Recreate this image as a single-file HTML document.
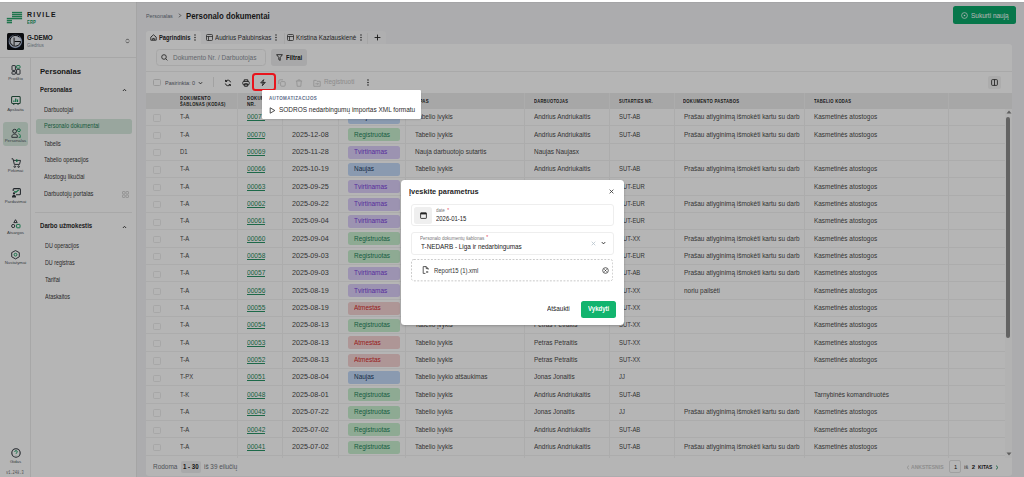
<!DOCTYPE html>
<html><head><meta charset="utf-8"><style>
html,body{margin:0;padding:0;width:1024px;height:477px;overflow:hidden;background:#fff}
body{position:relative;font-family:"Liberation Sans",sans-serif}
.r{position:absolute}
.t{position:absolute;white-space:nowrap;line-height:1;transform-origin:0 0}
</style></head><body>
<div class="r" style="left:0.00px;top:0.00px;width:1024.00px;height:477.00px;background:#f2f2f5"></div>
<div class="r" style="left:0.00px;top:0.00px;width:137.00px;height:477.00px;background:#ffffff"></div>
<div class="r" style="left:136.00px;top:0.00px;width:1.00px;height:477.00px;background:#e9e9e9"></div>
<div class="r" style="left:0.00px;top:57.00px;width:136.00px;height:0.80px;background:#ececec"></div>
<div class="r" style="left:30.00px;top:57.80px;width:0.80px;height:419.20px;background:#ececec"></div>
<svg class="r" style="left:0;top:0" width="30" height="30" viewBox="0 0 30 30" fill="#2aa46c"><rect x="12" y="11.85" width="10.100000000000001" height="1.45"/><rect x="12" y="13.85" width="10.100000000000001" height="1.45"/><rect x="12" y="15.85" width="10.100000000000001" height="1.45"/><rect x="6.8" y="17.85" width="15.3" height="1.45"/><rect x="6.8" y="19.85" width="5.2" height="1.45"/><rect x="6.8" y="21.85" width="5.2" height="1.45"/></svg>
<div class="t" style="left:27.00px;top:11px;font-size:7.2px;font-weight:bold;color:#1e1e1e;transform:scaleX(0.9623);letter-spacing:1.3px">RIVILE</div>
<div class="t" style="left:27.00px;top:21px;font-size:4.7px;font-weight:bold;color:#169a5f;transform:scaleX(0.8683);letter-spacing:0.2px">ERP</div>
<div class="r" style="left:7.00px;top:33.30px;width:16.60px;height:16.80px;background:#101216;border-radius:1.5px"></div>
<svg class="r" style="left:7px;top:33.3px" width="17" height="17" viewBox="0 0 17 17" fill="none"><defs><radialGradient id="lg" cx="50%" cy="50%" r="50%"><stop offset="0" stop-color="#e6e8ee"/><stop offset="0.7" stop-color="#e2e6ee"/><stop offset="0.88" stop-color="#b4c0d8"/><stop offset="1" stop-color="#4a5a7e"/></radialGradient></defs><circle cx="8.3" cy="8.4" r="6.9" fill="url(#lg)"/><path d="M12.4 4.2A5.4 5.4 0 1 0 13.7 8.5H7.6" fill="none" stroke="#111" stroke-width="1.0"/><path d="M7.1 4.6V12.4" stroke="#111" stroke-width="0.9"/></svg>
<div class="t" style="left:26.70px;top:35px;font-size:6.6px;font-weight:bold;color:#242424;transform:scaleX(0.9480);">G-DEMO</div>
<div class="t" style="left:26.70px;top:44px;font-size:4.7px;color:#8794a3;transform:scaleX(0.9617);">Giedrius</div>
<svg class="r" style="left:124.5px;top:38px" width="5" height="6" viewBox="0 0 5 6" fill="none" stroke="#444" stroke-width="0.8"><path d="M1 2.4L2.5 0.9L4 2.4M1 3.6L2.5 5.1L4 3.6"/></svg>
<div class="r" style="left:3.00px;top:122.00px;width:25.00px;height:24.00px;background:#d8eadf;border-radius:3px"></div>
<svg class="r" style="left:10.5px;top:65.4px" width="10" height="10" viewBox="0 0 10 10" fill="none" stroke="#30363d" stroke-width="0.95"><rect x="1" y="0.6" width="3.4" height="4.8" rx="0.5"/><rect x="1" y="6.6" width="3.4" height="2.6" rx="0.5"/><rect x="5.6" y="0.6" width="3.4" height="2.6" rx="0.5" stroke="#169a5f"/><rect x="5.6" y="4.4" width="3.4" height="4.8" rx="0.5"/></svg>
<svg class="r" style="left:10.5px;top:96px" width="10" height="10" viewBox="0 0 10 10" fill="none" stroke="#30363d" stroke-width="0.95"><rect x="0.6" y="0.5" width="8.6" height="7" rx="1" stroke="#2b5a45" stroke-width="1.05"/><path d="M2.8 8.9v-1.3M7 8.9v-1.3" stroke="#2b5a45" stroke-width="1.1"/><path d="M2.3 5.9h1.2V4.4H2.3zM4.1 5.9h1.2V2.4H4.1zM5.9 5.9h1.2V3.6H5.9z" fill="#169a5f" stroke="none"/></svg>
<svg class="r" style="left:10.5px;top:127.5px" width="10" height="10" viewBox="0 0 10 10" fill="none" stroke="#30363d" stroke-width="0.95"><circle cx="3.6" cy="3.2" r="1.9"/><path d="M0.8 9.3v-0.6c0-1.6 1.2-2.6 2.8-2.6s2.8 1 2.8 2.6v0.6z"/><circle cx="7.9" cy="2.2" r="1.45" stroke="#169a5f"/><path d="M7.6 9.3h1.8V8.6c0-1.5-.7-2.6-2-2.9" stroke="#169a5f"/></svg>
<svg class="r" style="left:10.5px;top:157.5px" width="10" height="10" viewBox="0 0 10 10" fill="none" stroke="#30363d" stroke-width="0.95"><path d="M0.6 0.8h1.4l1.3 5.6h5.2l1-4H2.6"/><circle cx="3.8" cy="8.6" r="0.8"/><circle cx="7.6" cy="8.6" r="0.8"/><path d="M5.8 1v2.6M4.8 2.7l1 1 1-1" stroke="#169a5f"/></svg>
<svg class="r" style="left:10.5px;top:188px" width="10" height="10" viewBox="0 0 10 10" fill="none" stroke="#30363d" stroke-width="0.95"><path d="M2.2 3V1.6c0-.6.4-1 1-1h5.2c.6 0 1 .4 1 1v4.2c0 .6-.4 1-1 1H5" stroke-width="1.05"/><path d="M3.4 3.2l1.5 1.1 2.9-2.4" stroke="#169a5f" stroke-width="1.15"/><circle cx="3" cy="5.4" r="1.15" fill="#30363d" stroke="none"/><path d="M1 9.6V8.5c0-.9.8-1.6 2-1.6s2 .7 2 1.6v1.1z" fill="#30363d" stroke="none"/></svg>
<svg class="r" style="left:10.5px;top:218.5px" width="10" height="10" viewBox="0 0 10 10" fill="none" stroke="#30363d" stroke-width="0.95"><path d="M4.5 0.7L6.2 3.6H2.8z"/><circle cx="2.2" cy="7" r="1.6"/><rect x="5.6" y="5.4" width="3.4" height="3.4" rx="0.5" stroke="#169a5f"/></svg>
<svg class="r" style="left:10.5px;top:249.8px" width="10" height="10" viewBox="0 0 10 10" fill="none" stroke="#30363d" stroke-width="0.95"><path d="M4.5 0.6L8.3 2.6v4.2L4.5 8.9L0.7 6.8V2.6z"/><circle cx="4.5" cy="4.7" r="1.4" stroke="#169a5f"/></svg>
<div class="t" style="left:0;width:31px;text-align:center;top:77px;font-size:4.3px;color:#4f5660">Prodžio</div>
<div class="t" style="left:0;width:31px;text-align:center;top:108px;font-size:4.3px;color:#4f5660">Apskaita</div>
<div class="t" style="left:0;width:31px;text-align:center;top:139px;font-size:4.3px;color:#4f5660">Personalas</div>
<div class="t" style="left:0;width:31px;text-align:center;top:169px;font-size:4.3px;color:#4f5660">Pirkimai</div>
<div class="t" style="left:0;width:31px;text-align:center;top:200px;font-size:4.3px;color:#4f5660">Pardavimai</div>
<div class="t" style="left:0;width:31px;text-align:center;top:231px;font-size:4.3px;color:#4f5660">Atsargos</div>
<div class="t" style="left:0;width:31px;text-align:center;top:261px;font-size:4.3px;color:#4f5660">Nustatymai</div>
<div class="t" style="left:0;width:31px;text-align:center;top:460px;font-size:4.3px;color:#4f5660">Gidas</div>
<div class="t" style="left:6.4px;top:471px;font-size:4.6px;color:#6f6f6f;font-family:'Liberation Mono',monospace;transform:scaleX(0.8)">v1.248.3</div>
<svg class="r" style="left:10.5px;top:447.5px" width="10" height="10" viewBox="0 0 10 10" fill="none" stroke="#30363d" stroke-width="0.95"><circle cx="5" cy="5" r="4.2" stroke-width="1.1"/><path d="M3.7 3.9c0-.8.6-1.3 1.3-1.3s1.3.5 1.3 1.2c0 1-1.3 1-1.3 2" stroke="#169a5f"/><circle cx="5" cy="7.5" r="0.35" fill="#169a5f" stroke="none"/></svg>
<div class="t" style="left:40.00px;top:68px;font-size:8.1px;font-weight:bold;color:#1f1f1f;transform:scaleX(0.9490);">Personalas</div>
<div class="t" style="left:40.00px;top:86px;font-size:7.0px;font-weight:bold;color:#2a2a2a;transform:scaleX(0.8565);">Personalas</div>
<svg class="r" style="left:122px;top:88px" width="5" height="4" viewBox="0 0 5 4" fill="none" stroke="#333" stroke-width="0.9"><path d="M0.9 3L2.5 1.3L4.1 3"/></svg>
<div class="r" style="left:35.50px;top:119.10px;width:96.50px;height:14.50px;background:#d8eadf;border-radius:2.5px"></div>
<div class="t" style="left:44.40px;top:107px;font-size:6.5px;color:#3a3a3a;transform:scaleX(0.8782);">Darbuotojai</div>
<div class="t" style="left:44.40px;top:123px;font-size:6.5px;color:#1b7c52;transform:scaleX(0.8549);">Personalo dokumentai</div>
<div class="t" style="left:44.40px;top:141px;font-size:6.5px;color:#3a3a3a;transform:scaleX(0.8303);">Tabelis</div>
<div class="t" style="left:44.40px;top:157px;font-size:6.5px;color:#3a3a3a;transform:scaleX(0.8569);">Tabelio operacijos</div>
<div class="t" style="left:44.40px;top:174px;font-size:6.5px;color:#3a3a3a;transform:scaleX(0.8641);">Atostogų likučiai</div>
<div class="t" style="left:44.40px;top:191px;font-size:6.5px;color:#3a3a3a;transform:scaleX(0.8707);">Darbuotojų portalas</div>
<svg class="r" style="left:121.5px;top:191px" width="7" height="7" viewBox="0 0 7 7" fill="none" stroke="#c2c2c2" stroke-width="0.7"><rect x="0.5" y="0.5" width="2.5" height="2.5" rx="0.5"/><rect x="4" y="0.5" width="2.5" height="2.5" rx="0.5"/><rect x="0.5" y="4" width="2.5" height="2.5" rx="0.5"/><rect x="4" y="4" width="2.5" height="2.5" rx="0.5"/></svg>
<div class="r" style="left:35.20px;top:212.00px;width:96.40px;height:0.70px;background:#ededed"></div>
<div class="t" style="left:40.00px;top:223px;font-size:6.9px;font-weight:bold;color:#2a2a2a;transform:scaleX(0.8794);">Darbo užmokestis</div>
<svg class="r" style="left:122px;top:224.5px" width="5" height="4" viewBox="0 0 5 4" fill="none" stroke="#333" stroke-width="0.9"><path d="M0.9 3L2.5 1.3L4.1 3"/></svg>
<div class="t" style="left:44.70px;top:243px;font-size:6.5px;color:#3a3a3a;transform:scaleX(0.8303);">DU operacijos</div>
<div class="t" style="left:44.70px;top:260px;font-size:6.5px;color:#3a3a3a;transform:scaleX(0.8221);">DU registras</div>
<div class="t" style="left:44.70px;top:277px;font-size:6.5px;color:#3a3a3a;transform:scaleX(0.8706);">Tarifai</div>
<div class="t" style="left:44.70px;top:294px;font-size:6.5px;color:#3a3a3a;transform:scaleX(0.8367);">Ataskaitos</div>
<div class="t" style="left:145.80px;top:14px;font-size:5.4px;color:#6b7280;transform:scaleX(0.9932);">Personalas</div>
<svg class="r" style="left:177.5px;top:13px" width="4" height="5" viewBox="0 0 4 5" fill="none" stroke="#555" stroke-width="0.8"><path d="M1 0.7L2.8 2.5L1 4.3"/></svg>
<div class="t" style="left:186.30px;top:12px;font-size:9.25px;font-weight:bold;color:#1f1f1f;transform:scaleX(0.8437);">Personalo dokumentai</div>
<div class="r" style="left:953.10px;top:6.30px;width:62.60px;height:17.60px;background:#0aa86a;border-radius:2.5px"></div>
<svg class="r" style="left:960.5px;top:11.5px" width="7" height="7" viewBox="0 0 7 7" fill="none" stroke="#fff" stroke-width="0.75"><circle cx="3.5" cy="3.5" r="2.9"/><circle cx="3.5" cy="3.5" r="0.8" fill="#fff" stroke="none"/></svg>
<div class="t" style="left:971.00px;top:13px;font-size:6.8px;color:#ffffff;transform:scaleX(0.9499);">Sukurti naują</div>
<div class="r" style="left:146.40px;top:31.20px;width:239.40px;height:13.10px;background:#f7f7f8;border-radius:3px 3px 0 0"></div>
<div class="r" style="left:146.40px;top:31.20px;width:54.80px;height:13.10px;background:#ffffff;border-radius:3px 3px 0 0"></div>
<div class="r" style="left:283.80px;top:32.50px;width:0.60px;height:11.00px;background:#eaeaea"></div>
<div class="r" style="left:367.30px;top:32.50px;width:0.60px;height:11.00px;background:#eaeaea"></div>
<svg class="r" style="left:150px;top:34.4px" width="7" height="7" viewBox="0 0 7 7" fill="none" stroke="#2a2a2a" stroke-width="0.85"><path d="M0.8 3.1L3.5 0.8l2.7 2.3V6.2H0.8z"/><path d="M2.7 6.2V4.4h1.6v1.8"/></svg>
<div class="t" style="left:158.70px;top:35px;font-size:6.9px;font-weight:bold;color:#222;transform:scaleX(0.8366);">Pagrindinis</div>
<svg class="r" style="left:193.5px;top:34.3px" width="2" height="7" viewBox="0 0 2 7" fill="#333"><circle cx="1" cy="1" r="0.78"/><circle cx="1" cy="3.5" r="0.78"/><circle cx="1" cy="6" r="0.78"/></svg>
<svg class="r" style="left:205.7px;top:34.2px" width="7" height="7" viewBox="0 0 7 7" fill="none" stroke="#333" stroke-width="0.75"><rect x="0.5" y="0.5" width="6" height="6" rx="0.9"/><path d="M0.5 2.5h6M2.5 2.5v4"/></svg>
<div class="t" style="left:214.70px;top:35px;font-size:6.9px;color:#333;transform:scaleX(0.9033);">Audrius Palubinskas</div>
<svg class="r" style="left:274.9px;top:34.3px" width="2" height="7" viewBox="0 0 2 7" fill="#333"><circle cx="1" cy="1" r="0.78"/><circle cx="1" cy="3.5" r="0.78"/><circle cx="1" cy="6" r="0.78"/></svg>
<svg class="r" style="left:286.8px;top:34.2px" width="7" height="7" viewBox="0 0 7 7" fill="none" stroke="#333" stroke-width="0.75"><rect x="0.5" y="0.5" width="6" height="6" rx="0.9"/><path d="M0.5 2.5h6M2.5 2.5v4"/></svg>
<div class="t" style="left:295.80px;top:35px;font-size:6.9px;color:#333;transform:scaleX(0.9152);">Kristina Kazlauskienė</div>
<svg class="r" style="left:359.5px;top:34.3px" width="2" height="7" viewBox="0 0 2 7" fill="#333"><circle cx="1" cy="1" r="0.78"/><circle cx="1" cy="3.5" r="0.78"/><circle cx="1" cy="6" r="0.78"/></svg>
<svg class="r" style="left:374px;top:34.2px" width="7" height="7" viewBox="0 0 7 7" fill="none" stroke="#222" stroke-width="0.9"><path d="M3.5 0.6v5.8M0.6 3.5h5.8"/></svg>
<div class="r" style="left:146.20px;top:44.30px;width:865.60px;height:431.30px;background:#ffffff;border-radius:0 3px 3px 3px"></div>
<div class="r" style="left:155.80px;top:48.60px;width:110.50px;height:17.80px;background:#fff;border:0.8px solid #ececec;border-radius:3.5px;box-sizing:border-box"></div>
<svg class="r" style="left:161px;top:54.2px" width="7" height="7" viewBox="0 0 7 7" fill="none" stroke="#333" stroke-width="0.85"><circle cx="3" cy="3" r="2.3"/><path d="M4.7 4.7L6.4 6.4"/></svg>
<div class="t" style="left:173.00px;top:55px;font-size:6.6px;color:#8b9099;transform:scaleX(0.9808);">Dokumento Nr. / Darbuotojas</div>
<div class="r" style="left:270.80px;top:49.00px;width:36.70px;height:16.80px;background:#ededee;border-radius:3px"></div>
<svg class="r" style="left:275.8px;top:54.2px" width="7" height="7" viewBox="0 0 7 7" fill="none" stroke="#222" stroke-width="0.85"><path d="M0.6 0.7h5.8L4.2 3.5v2.9L2.8 5.6V3.5z"/></svg>
<div class="t" style="left:286.20px;top:55px;font-size:6.6px;font-weight:bold;color:#222;transform:scaleX(0.9023);">Filtrai</div>
<div class="r" style="left:146.20px;top:71.00px;width:865.60px;height:0.60px;background:#eeeeee"></div>
<div class="r" style="left:153.00px;top:79.30px;width:7.70px;height:7.20px;background:#fff;border:0.8px solid #d8d8d8;border-radius:1.5px;box-sizing:border-box"></div>
<div class="t" style="left:164.80px;top:81px;font-size:5.6px;color:#5f6670;transform:scaleX(0.9746);">Pasirinkta: 0</div>
<svg class="r" style="left:198.3px;top:80.8px" width="5" height="4" viewBox="0 0 5 4" fill="none" stroke="#333" stroke-width="0.9"><path d="M0.9 1.2L2.5 2.9L4.1 1.2"/></svg>
<div class="r" style="left:213.10px;top:77.00px;width:0.60px;height:10.00px;background:#e4e4e4"></div>
<svg class="r" style="left:223.5px;top:78.5px" width="8" height="8" viewBox="0 0 8 8" fill="none" stroke="#222" stroke-width="0.9"><path d="M6.6 3.3A2.8 2.8 0 0 0 1.7 2.2M1.3 4.5A2.8 2.8 0 0 0 6.2 5.7"/><path d="M1.5 0.9v1.6h1.6M6.4 7v-1.5H4.8" stroke-linejoin="round"/></svg>
<svg class="r" style="left:241.5px;top:78.8px" width="8" height="8" viewBox="0 0 8 8" fill="none" stroke="#222" stroke-width="0.9"><path d="M2.2 2.4V0.8h3.6v1.6"/><rect x="0.8" y="2.4" width="6.4" height="3.4" rx="1"/><rect x="2.3" y="4.7" width="3.4" height="2.6" rx="0.4"/></svg>
<svg class="r" style="left:259.3px;top:78.6px" width="8" height="8" viewBox="0 0 8 8" fill="none" stroke="#222" stroke-width="0.85" stroke-linejoin="round"><path d="M4.7 0.6L1.7 3.9h2.6L3.3 6.7l3-3.3H3.7z"/></svg>
<svg class="r" style="left:277.5px;top:78.6px" width="8" height="8" viewBox="0 0 8 8" fill="none" stroke="#c9c9c9" stroke-width="0.8"><rect x="2.6" y="2.6" width="4.6" height="4.6" rx="1"/><path d="M0.8 5V1.8C0.8 1.2 1.2.8 1.8.8H5"/></svg>
<svg class="r" style="left:295px;top:78.6px" width="8" height="8" viewBox="0 0 8 8" fill="none" stroke="#c9c9c9" stroke-width="0.8"><path d="M0.9 2h6.2M2.9 2V.9h2.2V2M1.7 2l.5 5.3h3.6L6.3 2"/></svg>
<svg class="r" style="left:312.6px;top:78.6px" width="8" height="8" viewBox="0 0 8 8" fill="none" stroke="#c9c9c9" stroke-width="0.8"><path d="M0.8 1.4h2.4l.8.9h3.2v5H0.8z"/><path d="M2.4 4.8h3M4.4 3.8l1 1-1 1"/></svg>
<div class="t" style="left:323.90px;top:79px;font-size:6.4px;color:#c6c6c6;transform:scaleX(0.9919);">Registruoti</div>
<svg class="r" style="left:366.8px;top:78.8px" width="2" height="7" viewBox="0 0 2 7" fill="#222"><circle cx="1" cy="1" r="0.78"/><circle cx="1" cy="3.5" r="0.78"/><circle cx="1" cy="6" r="0.78"/></svg>
<div class="r" style="left:988.00px;top:76.00px;width:13.00px;height:12.50px;background:#f3f3f3;border-radius:2px"></div>
<svg class="r" style="left:991px;top:78.8px" width="7" height="7" viewBox="0 0 7 7" fill="none" stroke="#222" stroke-width="0.8"><rect x="0.6" y="0.6" width="5.8" height="5.8" rx="0.9"/><path d="M3.5 0.6v5.8"/></svg>
<div class="r" style="left:146.20px;top:93.00px;width:865.60px;height:15.60px;background:#ebebeb"></div>
<div class="r" style="left:0;top:0;width:1024px;height:457.8px;overflow:hidden">
<div class="r" style="left:237.00px;top:93.00px;width:1.00px;height:364.80px;background:#f2f2f2"></div>
<div class="r" style="left:282.00px;top:93.00px;width:1.00px;height:364.80px;background:#f2f2f2"></div>
<div class="r" style="left:338.00px;top:93.00px;width:1.00px;height:364.80px;background:#f2f2f2"></div>
<div class="r" style="left:405.00px;top:93.00px;width:1.00px;height:364.80px;background:#f2f2f2"></div>
<div class="r" style="left:524.00px;top:93.00px;width:1.00px;height:364.80px;background:#f2f2f2"></div>
<div class="r" style="left:609.00px;top:93.00px;width:1.00px;height:364.80px;background:#f2f2f2"></div>
<div class="r" style="left:674.00px;top:93.00px;width:1.00px;height:364.80px;background:#f2f2f2"></div>
<div class="r" style="left:804.00px;top:93.00px;width:1.00px;height:364.80px;background:#f2f2f2"></div>
<div class="r" style="left:948.00px;top:93.00px;width:1.00px;height:364.80px;background:#f2f2f2"></div>
<div class="t" style="left:180.00px;top:97px;font-size:4.6px;font-weight:bold;color:#262626;transform:scaleX(0.9409);letter-spacing:0.3px">DOKUMENTO</div>
<div class="t" style="left:180.00px;top:103px;font-size:4.6px;font-weight:bold;color:#262626;transform:scaleX(0.8852);letter-spacing:0.3px">ŠABLONAS (KODAS)</div>
<div class="t" style="left:246.90px;top:97px;font-size:4.6px;font-weight:bold;color:#262626;transform:scaleX(0.9409);letter-spacing:0.3px">DOKUMENTO</div>
<div class="t" style="left:246.90px;top:103px;font-size:4.6px;font-weight:bold;color:#262626;letter-spacing:0.3px">NR.</div>
<div class="t" style="left:292.00px;top:100px;font-size:4.6px;font-weight:bold;color:#262626;letter-spacing:0.3px">DATA</div>
<div class="t" style="left:347.50px;top:100px;font-size:4.6px;font-weight:bold;color:#262626;letter-spacing:0.3px">BŪSENA</div>
<div class="t" style="left:414.50px;top:100px;font-size:4.6px;font-weight:bold;color:#262626;transform:scaleX(0.9532);letter-spacing:0.3px">TIPAS</div>
<div class="t" style="left:533.80px;top:100px;font-size:4.6px;font-weight:bold;color:#262626;transform:scaleX(0.8836);letter-spacing:0.3px">DARBUOTOJAS</div>
<div class="t" style="left:619.00px;top:100px;font-size:4.6px;font-weight:bold;color:#262626;transform:scaleX(0.8716);letter-spacing:0.3px">SUTARTIES NR.</div>
<div class="t" style="left:683.00px;top:100px;font-size:4.6px;font-weight:bold;color:#262626;transform:scaleX(0.9147);letter-spacing:0.3px">DOKUMENTO PASTABOS</div>
<div class="t" style="left:813.60px;top:100px;font-size:4.6px;font-weight:bold;color:#262626;transform:scaleX(0.8992);letter-spacing:0.3px">TABELIO KODAS</div>
<div class="r" style="left:146.20px;top:125.15px;width:858.80px;height:0.80px;background:#f2f2f2"></div>
<div class="r" style="left:153.10px;top:114.40px;width:7.50px;height:7.30px;background:#fff;border:0.7px solid #ebebeb;border-radius:1.5px;box-sizing:border-box"></div>
<div class="t" style="left:180.00px;top:114px;font-size:6.7px;color:#4a4a4a;transform:scaleX(0.8800);">T-A</div>
<div class="t" style="left:246.90px;top:114px;font-size:6.7px;color:#1f8a5c;transform:scaleX(0.9834);">00071</div>
<div class="r" style="left:247.00px;top:120.30px;width:18.20px;height:0.60px;background:#2a9468"></div>
<div class="t" style="left:292.00px;top:114px;font-size:6.7px;color:#4a4a4a;transform:scaleX(1.0725);">2025-12-10</div>
<div class="r" style="left:347.60px;top:110.85px;width:52.70px;height:13.00px;background:#c3d9f8;border-radius:2.5px"></div>
<div class="t" style="left:354.20px;top:114px;font-size:6.7px;color:#213e63;transform:scaleX(0.9600);">Naujas</div>
<div class="t" style="left:414.70px;top:114px;font-size:6.7px;color:#4a4a4a;transform:scaleX(0.9600);">Tabelio įvykis</div>
<div class="t" style="left:534.00px;top:114px;font-size:6.7px;color:#4a4a4a;transform:scaleX(0.9600);">Andrius Andriukaitis</div>
<div class="t" style="left:619.00px;top:114px;font-size:6.7px;color:#4a4a4a;transform:scaleX(0.8800);">SUT-AB</div>
<div class="t" style="left:683.50px;top:114px;font-size:6.7px;color:#4a4a4a;transform:scaleX(0.9600);">Prašau atlyginimą išmokėti kartu su darb</div>
<div class="t" style="left:813.60px;top:114px;font-size:6.7px;color:#4a4a4a;transform:scaleX(0.9600);">Kasmetinės atostogos</div>
<div class="r" style="left:146.20px;top:142.50px;width:858.80px;height:0.80px;background:#f2f2f2"></div>
<div class="r" style="left:153.10px;top:131.75px;width:7.50px;height:7.30px;background:#fff;border:0.7px solid #ebebeb;border-radius:1.5px;box-sizing:border-box"></div>
<div class="t" style="left:180.00px;top:132px;font-size:6.7px;color:#4a4a4a;transform:scaleX(0.8800);">T-A</div>
<div class="t" style="left:246.90px;top:132px;font-size:6.7px;color:#1f8a5c;transform:scaleX(0.9834);">00070</div>
<div class="r" style="left:247.00px;top:138.30px;width:18.20px;height:0.60px;background:#2a9468"></div>
<div class="t" style="left:292.00px;top:132px;font-size:6.7px;color:#4a4a4a;transform:scaleX(1.0725);">2025-12-08</div>
<div class="r" style="left:347.60px;top:128.20px;width:52.70px;height:13.00px;background:#c9f0d0;border-radius:2.5px"></div>
<div class="t" style="left:354.20px;top:132px;font-size:6.7px;color:#23835a;transform:scaleX(0.9600);">Registruotas</div>
<div class="t" style="left:414.70px;top:132px;font-size:6.7px;color:#4a4a4a;transform:scaleX(0.9600);">Tabelio įvykis</div>
<div class="t" style="left:534.00px;top:132px;font-size:6.7px;color:#4a4a4a;transform:scaleX(0.9600);">Andrius Andriukaitis</div>
<div class="t" style="left:619.00px;top:132px;font-size:6.7px;color:#4a4a4a;transform:scaleX(0.8800);">SUT-AB</div>
<div class="t" style="left:683.50px;top:132px;font-size:6.7px;color:#4a4a4a;transform:scaleX(0.9600);">Prašau atlyginimą išmokėti kartu su darb</div>
<div class="t" style="left:813.60px;top:132px;font-size:6.7px;color:#4a4a4a;transform:scaleX(0.9600);">Kasmetinės atostogos</div>
<div class="r" style="left:146.20px;top:159.85px;width:858.80px;height:0.80px;background:#f2f2f2"></div>
<div class="r" style="left:153.10px;top:149.10px;width:7.50px;height:7.30px;background:#fff;border:0.7px solid #ebebeb;border-radius:1.5px;box-sizing:border-box"></div>
<div class="t" style="left:180.00px;top:149px;font-size:6.7px;color:#4a4a4a;transform:scaleX(0.8800);">D1</div>
<div class="t" style="left:246.90px;top:149px;font-size:6.7px;color:#1f8a5c;transform:scaleX(0.9834);">00069</div>
<div class="r" style="left:247.00px;top:155.30px;width:18.20px;height:0.60px;background:#2a9468"></div>
<div class="t" style="left:292.00px;top:149px;font-size:6.7px;color:#4a4a4a;transform:scaleX(1.0884);">2025-11-28</div>
<div class="r" style="left:347.60px;top:145.55px;width:52.70px;height:13.00px;background:#dccffa;border-radius:2.5px"></div>
<div class="t" style="left:354.20px;top:149px;font-size:6.7px;color:#7b3fdc;transform:scaleX(0.9600);">Tvirtinamas</div>
<div class="t" style="left:414.70px;top:149px;font-size:6.7px;color:#4a4a4a;transform:scaleX(0.9600);">Nauja darbuotojo sutartis</div>
<div class="t" style="left:534.00px;top:149px;font-size:6.7px;color:#4a4a4a;transform:scaleX(0.9600);">Naujas Naujasx</div>
<div class="t" style="left:619.00px;top:149px;font-size:6.7px;color:#4a4a4a;transform:scaleX(0.8800);"></div>
<div class="t" style="left:683.50px;top:149px;font-size:6.7px;color:#4a4a4a;transform:scaleX(0.9600);"></div>
<div class="t" style="left:813.60px;top:149px;font-size:6.7px;color:#4a4a4a;transform:scaleX(0.9600);"></div>
<div class="r" style="left:146.20px;top:177.20px;width:858.80px;height:0.80px;background:#f2f2f2"></div>
<div class="r" style="left:153.10px;top:166.45px;width:7.50px;height:7.30px;background:#fff;border:0.7px solid #ebebeb;border-radius:1.5px;box-sizing:border-box"></div>
<div class="t" style="left:180.00px;top:166px;font-size:6.7px;color:#4a4a4a;transform:scaleX(0.8800);">T-A</div>
<div class="t" style="left:246.90px;top:166px;font-size:6.7px;color:#1f8a5c;transform:scaleX(0.9834);">00066</div>
<div class="r" style="left:247.00px;top:172.30px;width:18.20px;height:0.60px;background:#2a9468"></div>
<div class="t" style="left:292.00px;top:166px;font-size:6.7px;color:#4a4a4a;transform:scaleX(1.0725);">2025-10-19</div>
<div class="r" style="left:347.60px;top:162.90px;width:52.70px;height:13.00px;background:#c3d9f8;border-radius:2.5px"></div>
<div class="t" style="left:354.20px;top:166px;font-size:6.7px;color:#213e63;transform:scaleX(0.9600);">Naujas</div>
<div class="t" style="left:414.70px;top:166px;font-size:6.7px;color:#4a4a4a;transform:scaleX(0.9600);">Tabelio įvykis</div>
<div class="t" style="left:534.00px;top:166px;font-size:6.7px;color:#4a4a4a;transform:scaleX(0.9600);">Andrius Andriukaitis</div>
<div class="t" style="left:619.00px;top:166px;font-size:6.7px;color:#4a4a4a;transform:scaleX(0.8800);">SUT-AB</div>
<div class="t" style="left:683.50px;top:166px;font-size:6.7px;color:#4a4a4a;transform:scaleX(0.9600);">Prašau atlyginimą išmokėti kartu su darb</div>
<div class="t" style="left:813.60px;top:166px;font-size:6.7px;color:#4a4a4a;transform:scaleX(0.9600);">Kasmetinės atostogos</div>
<div class="r" style="left:146.20px;top:194.55px;width:858.80px;height:0.80px;background:#f2f2f2"></div>
<div class="r" style="left:153.10px;top:183.80px;width:7.50px;height:7.30px;background:#fff;border:0.7px solid #ebebeb;border-radius:1.5px;box-sizing:border-box"></div>
<div class="t" style="left:180.00px;top:184px;font-size:6.7px;color:#4a4a4a;transform:scaleX(0.8800);">T-A</div>
<div class="t" style="left:246.90px;top:184px;font-size:6.7px;color:#1f8a5c;transform:scaleX(0.9834);">00063</div>
<div class="r" style="left:247.00px;top:190.30px;width:18.20px;height:0.60px;background:#2a9468"></div>
<div class="t" style="left:292.00px;top:184px;font-size:6.7px;color:#4a4a4a;transform:scaleX(1.0725);">2025-09-25</div>
<div class="r" style="left:347.60px;top:180.25px;width:52.70px;height:13.00px;background:#dccffa;border-radius:2.5px"></div>
<div class="t" style="left:354.20px;top:184px;font-size:6.7px;color:#7b3fdc;transform:scaleX(0.9600);">Tvirtinamas</div>
<div class="t" style="left:414.70px;top:184px;font-size:6.7px;color:#4a4a4a;transform:scaleX(0.9600);">Tabelio įvykis</div>
<div class="t" style="left:534.00px;top:184px;font-size:6.7px;color:#4a4a4a;transform:scaleX(0.9600);">Andrius Andriukaitis</div>
<div class="t" style="left:619.00px;top:184px;font-size:6.7px;color:#4a4a4a;transform:scaleX(0.8800);">SUT-EUR</div>
<div class="t" style="left:683.50px;top:184px;font-size:6.7px;color:#4a4a4a;transform:scaleX(0.9600);"></div>
<div class="t" style="left:813.60px;top:184px;font-size:6.7px;color:#4a4a4a;transform:scaleX(0.9600);">Kasmetinės atostogos</div>
<div class="r" style="left:146.20px;top:211.90px;width:858.80px;height:0.80px;background:#f2f2f2"></div>
<div class="r" style="left:153.10px;top:201.15px;width:7.50px;height:7.30px;background:#fff;border:0.7px solid #ebebeb;border-radius:1.5px;box-sizing:border-box"></div>
<div class="t" style="left:180.00px;top:201px;font-size:6.7px;color:#4a4a4a;transform:scaleX(0.8800);">T-A</div>
<div class="t" style="left:246.90px;top:201px;font-size:6.7px;color:#1f8a5c;transform:scaleX(0.9834);">00062</div>
<div class="r" style="left:247.00px;top:207.30px;width:18.20px;height:0.60px;background:#2a9468"></div>
<div class="t" style="left:292.00px;top:201px;font-size:6.7px;color:#4a4a4a;transform:scaleX(1.0725);">2025-09-22</div>
<div class="r" style="left:347.60px;top:197.60px;width:52.70px;height:13.00px;background:#dccffa;border-radius:2.5px"></div>
<div class="t" style="left:354.20px;top:201px;font-size:6.7px;color:#7b3fdc;transform:scaleX(0.9600);">Tvirtinamas</div>
<div class="t" style="left:414.70px;top:201px;font-size:6.7px;color:#4a4a4a;transform:scaleX(0.9600);">Tabelio įvykis</div>
<div class="t" style="left:534.00px;top:201px;font-size:6.7px;color:#4a4a4a;transform:scaleX(0.9600);">Andrius Andriukaitis</div>
<div class="t" style="left:619.00px;top:201px;font-size:6.7px;color:#4a4a4a;transform:scaleX(0.8800);">SUT-EUR</div>
<div class="t" style="left:683.50px;top:201px;font-size:6.7px;color:#4a4a4a;transform:scaleX(0.9600);">Prašau atlyginimą išmokėti kartu su darb</div>
<div class="t" style="left:813.60px;top:201px;font-size:6.7px;color:#4a4a4a;transform:scaleX(0.9600);">Kasmetinės atostogos</div>
<div class="r" style="left:146.20px;top:229.25px;width:858.80px;height:0.80px;background:#f2f2f2"></div>
<div class="r" style="left:153.10px;top:218.50px;width:7.50px;height:7.30px;background:#fff;border:0.7px solid #ebebeb;border-radius:1.5px;box-sizing:border-box"></div>
<div class="t" style="left:180.00px;top:218px;font-size:6.7px;color:#4a4a4a;transform:scaleX(0.8800);">T-A</div>
<div class="t" style="left:246.90px;top:218px;font-size:6.7px;color:#1f8a5c;transform:scaleX(0.9834);">00061</div>
<div class="r" style="left:247.00px;top:224.30px;width:18.20px;height:0.60px;background:#2a9468"></div>
<div class="t" style="left:292.00px;top:218px;font-size:6.7px;color:#4a4a4a;transform:scaleX(1.0725);">2025-09-04</div>
<div class="r" style="left:347.60px;top:214.95px;width:52.70px;height:13.00px;background:#dccffa;border-radius:2.5px"></div>
<div class="t" style="left:354.20px;top:218px;font-size:6.7px;color:#7b3fdc;transform:scaleX(0.9600);">Tvirtinamas</div>
<div class="t" style="left:414.70px;top:218px;font-size:6.7px;color:#4a4a4a;transform:scaleX(0.9600);">Tabelio įvykis</div>
<div class="t" style="left:534.00px;top:218px;font-size:6.7px;color:#4a4a4a;transform:scaleX(0.9600);">Andrius Andriukaitis</div>
<div class="t" style="left:619.00px;top:218px;font-size:6.7px;color:#4a4a4a;transform:scaleX(0.8800);">SUT-EUR</div>
<div class="t" style="left:683.50px;top:218px;font-size:6.7px;color:#4a4a4a;transform:scaleX(0.9600);"></div>
<div class="t" style="left:813.60px;top:218px;font-size:6.7px;color:#4a4a4a;transform:scaleX(0.9600);">Kasmetinės atostogos</div>
<div class="r" style="left:146.20px;top:246.60px;width:858.80px;height:0.80px;background:#f2f2f2"></div>
<div class="r" style="left:153.10px;top:235.85px;width:7.50px;height:7.30px;background:#fff;border:0.7px solid #ebebeb;border-radius:1.5px;box-sizing:border-box"></div>
<div class="t" style="left:180.00px;top:236px;font-size:6.7px;color:#4a4a4a;transform:scaleX(0.8800);">T-A</div>
<div class="t" style="left:246.90px;top:236px;font-size:6.7px;color:#1f8a5c;transform:scaleX(0.9834);">00060</div>
<div class="r" style="left:247.00px;top:242.30px;width:18.20px;height:0.60px;background:#2a9468"></div>
<div class="t" style="left:292.00px;top:236px;font-size:6.7px;color:#4a4a4a;transform:scaleX(1.0725);">2025-09-04</div>
<div class="r" style="left:347.60px;top:232.30px;width:52.70px;height:13.00px;background:#c9f0d0;border-radius:2.5px"></div>
<div class="t" style="left:354.20px;top:236px;font-size:6.7px;color:#23835a;transform:scaleX(0.9600);">Registruotas</div>
<div class="t" style="left:414.70px;top:236px;font-size:6.7px;color:#4a4a4a;transform:scaleX(0.9600);">Tabelio įvykis</div>
<div class="t" style="left:534.00px;top:236px;font-size:6.7px;color:#4a4a4a;transform:scaleX(0.9600);">Andrius Andriukaitis</div>
<div class="t" style="left:619.00px;top:236px;font-size:6.7px;color:#4a4a4a;transform:scaleX(0.8800);">SUT-XX</div>
<div class="t" style="left:683.50px;top:236px;font-size:6.7px;color:#4a4a4a;transform:scaleX(0.9600);">Prašau atlyginimą išmokėti kartu su darb</div>
<div class="t" style="left:813.60px;top:236px;font-size:6.7px;color:#4a4a4a;transform:scaleX(0.9600);">Kasmetinės atostogos</div>
<div class="r" style="left:146.20px;top:263.95px;width:858.80px;height:0.80px;background:#f2f2f2"></div>
<div class="r" style="left:153.10px;top:253.20px;width:7.50px;height:7.30px;background:#fff;border:0.7px solid #ebebeb;border-radius:1.5px;box-sizing:border-box"></div>
<div class="t" style="left:180.00px;top:253px;font-size:6.7px;color:#4a4a4a;transform:scaleX(0.8800);">T-A</div>
<div class="t" style="left:246.90px;top:253px;font-size:6.7px;color:#1f8a5c;transform:scaleX(0.9834);">00058</div>
<div class="r" style="left:247.00px;top:259.30px;width:18.20px;height:0.60px;background:#2a9468"></div>
<div class="t" style="left:292.00px;top:253px;font-size:6.7px;color:#4a4a4a;transform:scaleX(1.0725);">2025-09-03</div>
<div class="r" style="left:347.60px;top:249.65px;width:52.70px;height:13.00px;background:#c9f0d0;border-radius:2.5px"></div>
<div class="t" style="left:354.20px;top:253px;font-size:6.7px;color:#23835a;transform:scaleX(0.9600);">Registruotas</div>
<div class="t" style="left:414.70px;top:253px;font-size:6.7px;color:#4a4a4a;transform:scaleX(0.9600);">Tabelio įvykis</div>
<div class="t" style="left:534.00px;top:253px;font-size:6.7px;color:#4a4a4a;transform:scaleX(0.9600);">Andrius Andriukaitis</div>
<div class="t" style="left:619.00px;top:253px;font-size:6.7px;color:#4a4a4a;transform:scaleX(0.8800);">SUT-EUR</div>
<div class="t" style="left:683.50px;top:253px;font-size:6.7px;color:#4a4a4a;transform:scaleX(0.9600);">Prašau atlyginimą išmokėti kartu su darb</div>
<div class="t" style="left:813.60px;top:253px;font-size:6.7px;color:#4a4a4a;transform:scaleX(0.9600);">Kasmetinės atostogos</div>
<div class="r" style="left:146.20px;top:281.30px;width:858.80px;height:0.80px;background:#f2f2f2"></div>
<div class="r" style="left:153.10px;top:270.55px;width:7.50px;height:7.30px;background:#fff;border:0.7px solid #ebebeb;border-radius:1.5px;box-sizing:border-box"></div>
<div class="t" style="left:180.00px;top:270px;font-size:6.7px;color:#4a4a4a;transform:scaleX(0.8800);">T-A</div>
<div class="t" style="left:246.90px;top:270px;font-size:6.7px;color:#1f8a5c;transform:scaleX(0.9834);">00057</div>
<div class="r" style="left:247.00px;top:276.30px;width:18.20px;height:0.60px;background:#2a9468"></div>
<div class="t" style="left:292.00px;top:270px;font-size:6.7px;color:#4a4a4a;transform:scaleX(1.0725);">2025-09-03</div>
<div class="r" style="left:347.60px;top:267.00px;width:52.70px;height:13.00px;background:#dccffa;border-radius:2.5px"></div>
<div class="t" style="left:354.20px;top:270px;font-size:6.7px;color:#7b3fdc;transform:scaleX(0.9600);">Tvirtinamas</div>
<div class="t" style="left:414.70px;top:270px;font-size:6.7px;color:#4a4a4a;transform:scaleX(0.9600);">Tabelio įvykis</div>
<div class="t" style="left:534.00px;top:270px;font-size:6.7px;color:#4a4a4a;transform:scaleX(0.9600);">Andrius Andriukaitis</div>
<div class="t" style="left:619.00px;top:270px;font-size:6.7px;color:#4a4a4a;transform:scaleX(0.8800);">SUT-AB</div>
<div class="t" style="left:683.50px;top:270px;font-size:6.7px;color:#4a4a4a;transform:scaleX(0.9600);">Prašau atlyginimą išmokėti kartu su darb</div>
<div class="t" style="left:813.60px;top:270px;font-size:6.7px;color:#4a4a4a;transform:scaleX(0.9600);">Kasmetinės atostogos</div>
<div class="r" style="left:146.20px;top:298.65px;width:858.80px;height:0.80px;background:#f2f2f2"></div>
<div class="r" style="left:153.10px;top:287.90px;width:7.50px;height:7.30px;background:#fff;border:0.7px solid #ebebeb;border-radius:1.5px;box-sizing:border-box"></div>
<div class="t" style="left:180.00px;top:288px;font-size:6.7px;color:#4a4a4a;transform:scaleX(0.8800);">T-A</div>
<div class="t" style="left:246.90px;top:288px;font-size:6.7px;color:#1f8a5c;transform:scaleX(0.9834);">00056</div>
<div class="r" style="left:247.00px;top:294.30px;width:18.20px;height:0.60px;background:#2a9468"></div>
<div class="t" style="left:292.00px;top:288px;font-size:6.7px;color:#4a4a4a;transform:scaleX(1.0725);">2025-08-19</div>
<div class="r" style="left:347.60px;top:284.35px;width:52.70px;height:13.00px;background:#dccffa;border-radius:2.5px"></div>
<div class="t" style="left:354.20px;top:288px;font-size:6.7px;color:#7b3fdc;transform:scaleX(0.9600);">Tvirtinamas</div>
<div class="t" style="left:414.70px;top:288px;font-size:6.7px;color:#4a4a4a;transform:scaleX(0.9600);">Tabelio įvykis</div>
<div class="t" style="left:534.00px;top:288px;font-size:6.7px;color:#4a4a4a;transform:scaleX(0.9600);">Andrius Andriukaitis</div>
<div class="t" style="left:619.00px;top:288px;font-size:6.7px;color:#4a4a4a;transform:scaleX(0.8800);">SUT-XX</div>
<div class="t" style="left:683.50px;top:288px;font-size:6.7px;color:#4a4a4a;transform:scaleX(0.9600);">noriu pailsėti</div>
<div class="t" style="left:813.60px;top:288px;font-size:6.7px;color:#4a4a4a;transform:scaleX(0.9600);">Kasmetinės atostogos</div>
<div class="r" style="left:146.20px;top:316.00px;width:858.80px;height:0.80px;background:#f2f2f2"></div>
<div class="r" style="left:153.10px;top:305.25px;width:7.50px;height:7.30px;background:#fff;border:0.7px solid #ebebeb;border-radius:1.5px;box-sizing:border-box"></div>
<div class="t" style="left:180.00px;top:305px;font-size:6.7px;color:#4a4a4a;transform:scaleX(0.8800);">T-A</div>
<div class="t" style="left:246.90px;top:305px;font-size:6.7px;color:#1f8a5c;transform:scaleX(0.9834);">00055</div>
<div class="r" style="left:247.00px;top:311.30px;width:18.20px;height:0.60px;background:#2a9468"></div>
<div class="t" style="left:292.00px;top:305px;font-size:6.7px;color:#4a4a4a;transform:scaleX(1.0725);">2025-08-19</div>
<div class="r" style="left:347.60px;top:301.70px;width:52.70px;height:13.00px;background:#f6d3d3;border-radius:2.5px"></div>
<div class="t" style="left:354.20px;top:305px;font-size:6.7px;color:#d42b2b;transform:scaleX(0.9600);">Atmestas</div>
<div class="t" style="left:414.70px;top:305px;font-size:6.7px;color:#4a4a4a;transform:scaleX(0.9600);">Tabelio įvykis</div>
<div class="t" style="left:534.00px;top:305px;font-size:6.7px;color:#4a4a4a;transform:scaleX(0.9600);">Petras Petraitis</div>
<div class="t" style="left:619.00px;top:305px;font-size:6.7px;color:#4a4a4a;transform:scaleX(0.8800);">SUT-XX</div>
<div class="t" style="left:683.50px;top:305px;font-size:6.7px;color:#4a4a4a;transform:scaleX(0.9600);"></div>
<div class="t" style="left:813.60px;top:305px;font-size:6.7px;color:#4a4a4a;transform:scaleX(0.9600);">Kasmetinės atostogos</div>
<div class="r" style="left:146.20px;top:333.35px;width:858.80px;height:0.80px;background:#f2f2f2"></div>
<div class="r" style="left:153.10px;top:322.60px;width:7.50px;height:7.30px;background:#fff;border:0.7px solid #ebebeb;border-radius:1.5px;box-sizing:border-box"></div>
<div class="t" style="left:180.00px;top:322px;font-size:6.7px;color:#4a4a4a;transform:scaleX(0.8800);">T-A</div>
<div class="t" style="left:246.90px;top:322px;font-size:6.7px;color:#1f8a5c;transform:scaleX(0.9834);">00054</div>
<div class="r" style="left:247.00px;top:328.30px;width:18.20px;height:0.60px;background:#2a9468"></div>
<div class="t" style="left:292.00px;top:322px;font-size:6.7px;color:#4a4a4a;transform:scaleX(1.0725);">2025-08-13</div>
<div class="r" style="left:347.60px;top:319.05px;width:52.70px;height:13.00px;background:#c9f0d0;border-radius:2.5px"></div>
<div class="t" style="left:354.20px;top:322px;font-size:6.7px;color:#23835a;transform:scaleX(0.9600);">Registruotas</div>
<div class="t" style="left:414.70px;top:322px;font-size:6.7px;color:#4a4a4a;transform:scaleX(0.9600);">Tabelio įvykis</div>
<div class="t" style="left:534.00px;top:322px;font-size:6.7px;color:#4a4a4a;transform:scaleX(0.9600);">Petras Petraitis</div>
<div class="t" style="left:619.00px;top:322px;font-size:6.7px;color:#4a4a4a;transform:scaleX(0.8800);">SUT-XX</div>
<div class="t" style="left:683.50px;top:322px;font-size:6.7px;color:#4a4a4a;transform:scaleX(0.9600);"></div>
<div class="t" style="left:813.60px;top:322px;font-size:6.7px;color:#4a4a4a;transform:scaleX(0.9600);">Kasmetinės atostogos</div>
<div class="r" style="left:146.20px;top:350.70px;width:858.80px;height:0.80px;background:#f2f2f2"></div>
<div class="r" style="left:153.10px;top:339.95px;width:7.50px;height:7.30px;background:#fff;border:0.7px solid #ebebeb;border-radius:1.5px;box-sizing:border-box"></div>
<div class="t" style="left:180.00px;top:340px;font-size:6.7px;color:#4a4a4a;transform:scaleX(0.8800);">T-A</div>
<div class="t" style="left:246.90px;top:340px;font-size:6.7px;color:#1f8a5c;transform:scaleX(0.9834);">00053</div>
<div class="r" style="left:247.00px;top:346.30px;width:18.20px;height:0.60px;background:#2a9468"></div>
<div class="t" style="left:292.00px;top:340px;font-size:6.7px;color:#4a4a4a;transform:scaleX(1.0725);">2025-08-13</div>
<div class="r" style="left:347.60px;top:336.40px;width:52.70px;height:13.00px;background:#f6d3d3;border-radius:2.5px"></div>
<div class="t" style="left:354.20px;top:340px;font-size:6.7px;color:#d42b2b;transform:scaleX(0.9600);">Atmestas</div>
<div class="t" style="left:414.70px;top:340px;font-size:6.7px;color:#4a4a4a;transform:scaleX(0.9600);">Tabelio įvykis</div>
<div class="t" style="left:534.00px;top:340px;font-size:6.7px;color:#4a4a4a;transform:scaleX(0.9600);">Petras Petraitis</div>
<div class="t" style="left:619.00px;top:340px;font-size:6.7px;color:#4a4a4a;transform:scaleX(0.8800);">SUT-XX</div>
<div class="t" style="left:683.50px;top:340px;font-size:6.7px;color:#4a4a4a;transform:scaleX(0.9600);"></div>
<div class="t" style="left:813.60px;top:340px;font-size:6.7px;color:#4a4a4a;transform:scaleX(0.9600);">Kasmetinės atostogos</div>
<div class="r" style="left:146.20px;top:368.05px;width:858.80px;height:0.80px;background:#f2f2f2"></div>
<div class="r" style="left:153.10px;top:357.30px;width:7.50px;height:7.30px;background:#fff;border:0.7px solid #ebebeb;border-radius:1.5px;box-sizing:border-box"></div>
<div class="t" style="left:180.00px;top:357px;font-size:6.7px;color:#4a4a4a;transform:scaleX(0.8800);">T-A</div>
<div class="t" style="left:246.90px;top:357px;font-size:6.7px;color:#1f8a5c;transform:scaleX(0.9834);">00052</div>
<div class="r" style="left:247.00px;top:363.30px;width:18.20px;height:0.60px;background:#2a9468"></div>
<div class="t" style="left:292.00px;top:357px;font-size:6.7px;color:#4a4a4a;transform:scaleX(1.0725);">2025-08-13</div>
<div class="r" style="left:347.60px;top:353.75px;width:52.70px;height:13.00px;background:#f6d3d3;border-radius:2.5px"></div>
<div class="t" style="left:354.20px;top:357px;font-size:6.7px;color:#d42b2b;transform:scaleX(0.9600);">Atmestas</div>
<div class="t" style="left:414.70px;top:357px;font-size:6.7px;color:#4a4a4a;transform:scaleX(0.9600);">Tabelio įvykis</div>
<div class="t" style="left:534.00px;top:357px;font-size:6.7px;color:#4a4a4a;transform:scaleX(0.9600);">Petras Petraitis</div>
<div class="t" style="left:619.00px;top:357px;font-size:6.7px;color:#4a4a4a;transform:scaleX(0.8800);">SUT-XX</div>
<div class="t" style="left:683.50px;top:357px;font-size:6.7px;color:#4a4a4a;transform:scaleX(0.9600);"></div>
<div class="t" style="left:813.60px;top:357px;font-size:6.7px;color:#4a4a4a;transform:scaleX(0.9600);">Kasmetinės atostogos</div>
<div class="r" style="left:146.20px;top:385.40px;width:858.80px;height:0.80px;background:#f2f2f2"></div>
<div class="r" style="left:153.10px;top:374.65px;width:7.50px;height:7.30px;background:#fff;border:0.7px solid #ebebeb;border-radius:1.5px;box-sizing:border-box"></div>
<div class="t" style="left:180.00px;top:374px;font-size:6.7px;color:#4a4a4a;transform:scaleX(0.8800);">T-PX</div>
<div class="t" style="left:246.90px;top:374px;font-size:6.7px;color:#1f8a5c;transform:scaleX(0.9834);">00051</div>
<div class="r" style="left:247.00px;top:380.30px;width:18.20px;height:0.60px;background:#2a9468"></div>
<div class="t" style="left:292.00px;top:374px;font-size:6.7px;color:#4a4a4a;transform:scaleX(1.0725);">2025-08-04</div>
<div class="r" style="left:347.60px;top:371.10px;width:52.70px;height:13.00px;background:#c3d9f8;border-radius:2.5px"></div>
<div class="t" style="left:354.20px;top:374px;font-size:6.7px;color:#213e63;transform:scaleX(0.9600);">Naujas</div>
<div class="t" style="left:414.70px;top:374px;font-size:6.7px;color:#4a4a4a;transform:scaleX(0.9600);">Tabelio įvykio atšaukimas</div>
<div class="t" style="left:534.00px;top:374px;font-size:6.7px;color:#4a4a4a;transform:scaleX(0.9600);">Jonas Jonaitis</div>
<div class="t" style="left:619.00px;top:374px;font-size:6.7px;color:#4a4a4a;transform:scaleX(0.8800);">JJ</div>
<div class="t" style="left:683.50px;top:374px;font-size:6.7px;color:#4a4a4a;transform:scaleX(0.9600);"></div>
<div class="t" style="left:813.60px;top:374px;font-size:6.7px;color:#4a4a4a;transform:scaleX(0.9600);"></div>
<div class="r" style="left:146.20px;top:402.75px;width:858.80px;height:0.80px;background:#f2f2f2"></div>
<div class="r" style="left:153.10px;top:392.00px;width:7.50px;height:7.30px;background:#fff;border:0.7px solid #ebebeb;border-radius:1.5px;box-sizing:border-box"></div>
<div class="t" style="left:180.00px;top:392px;font-size:6.7px;color:#4a4a4a;transform:scaleX(0.8800);">T-K</div>
<div class="t" style="left:246.90px;top:392px;font-size:6.7px;color:#1f8a5c;transform:scaleX(0.9834);">00048</div>
<div class="r" style="left:247.00px;top:398.30px;width:18.20px;height:0.60px;background:#2a9468"></div>
<div class="t" style="left:292.00px;top:392px;font-size:6.7px;color:#4a4a4a;transform:scaleX(1.0725);">2025-08-01</div>
<div class="r" style="left:347.60px;top:388.45px;width:52.70px;height:13.00px;background:#c9f0d0;border-radius:2.5px"></div>
<div class="t" style="left:354.20px;top:392px;font-size:6.7px;color:#23835a;transform:scaleX(0.9600);">Registruotas</div>
<div class="t" style="left:414.70px;top:392px;font-size:6.7px;color:#4a4a4a;transform:scaleX(0.9600);">Tabelio įvykis</div>
<div class="t" style="left:534.00px;top:392px;font-size:6.7px;color:#4a4a4a;transform:scaleX(0.9600);">Andrius Andriukaitis</div>
<div class="t" style="left:619.00px;top:392px;font-size:6.7px;color:#4a4a4a;transform:scaleX(0.8800);">SUT-AB</div>
<div class="t" style="left:683.50px;top:392px;font-size:6.7px;color:#4a4a4a;transform:scaleX(0.9600);"></div>
<div class="t" style="left:813.60px;top:392px;font-size:6.7px;color:#4a4a4a;transform:scaleX(0.9600);">Tarnybinės komandiruotės</div>
<div class="r" style="left:146.20px;top:420.10px;width:858.80px;height:0.80px;background:#f2f2f2"></div>
<div class="r" style="left:153.10px;top:409.35px;width:7.50px;height:7.30px;background:#fff;border:0.7px solid #ebebeb;border-radius:1.5px;box-sizing:border-box"></div>
<div class="t" style="left:180.00px;top:409px;font-size:6.7px;color:#4a4a4a;transform:scaleX(0.8800);">T-A</div>
<div class="t" style="left:246.90px;top:409px;font-size:6.7px;color:#1f8a5c;transform:scaleX(0.9834);">00045</div>
<div class="r" style="left:247.00px;top:415.30px;width:18.20px;height:0.60px;background:#2a9468"></div>
<div class="t" style="left:292.00px;top:409px;font-size:6.7px;color:#4a4a4a;transform:scaleX(1.0725);">2025-07-22</div>
<div class="r" style="left:347.60px;top:405.80px;width:52.70px;height:13.00px;background:#c9f0d0;border-radius:2.5px"></div>
<div class="t" style="left:354.20px;top:409px;font-size:6.7px;color:#23835a;transform:scaleX(0.9600);">Registruotas</div>
<div class="t" style="left:414.70px;top:409px;font-size:6.7px;color:#4a4a4a;transform:scaleX(0.9600);">Tabelio įvykis</div>
<div class="t" style="left:534.00px;top:409px;font-size:6.7px;color:#4a4a4a;transform:scaleX(0.9600);">Jonas Jonaitis</div>
<div class="t" style="left:619.00px;top:409px;font-size:6.7px;color:#4a4a4a;transform:scaleX(0.8800);">JJ</div>
<div class="t" style="left:683.50px;top:409px;font-size:6.7px;color:#4a4a4a;transform:scaleX(0.9600);">Prašau atlyginimą išmokėti kartu su darb</div>
<div class="t" style="left:813.60px;top:409px;font-size:6.7px;color:#4a4a4a;transform:scaleX(0.9600);">Kasmetinės atostogos</div>
<div class="r" style="left:146.20px;top:437.45px;width:858.80px;height:0.80px;background:#f2f2f2"></div>
<div class="r" style="left:153.10px;top:426.70px;width:7.50px;height:7.30px;background:#fff;border:0.7px solid #ebebeb;border-radius:1.5px;box-sizing:border-box"></div>
<div class="t" style="left:180.00px;top:427px;font-size:6.7px;color:#4a4a4a;transform:scaleX(0.8800);">T-A</div>
<div class="t" style="left:246.90px;top:427px;font-size:6.7px;color:#1f8a5c;transform:scaleX(0.9834);">00042</div>
<div class="r" style="left:247.00px;top:433.30px;width:18.20px;height:0.60px;background:#2a9468"></div>
<div class="t" style="left:292.00px;top:427px;font-size:6.7px;color:#4a4a4a;transform:scaleX(1.0725);">2025-07-02</div>
<div class="r" style="left:347.60px;top:423.15px;width:52.70px;height:13.00px;background:#c9f0d0;border-radius:2.5px"></div>
<div class="t" style="left:354.20px;top:427px;font-size:6.7px;color:#23835a;transform:scaleX(0.9600);">Registruotas</div>
<div class="t" style="left:414.70px;top:427px;font-size:6.7px;color:#4a4a4a;transform:scaleX(0.9600);">Tabelio įvykis</div>
<div class="t" style="left:534.00px;top:427px;font-size:6.7px;color:#4a4a4a;transform:scaleX(0.9600);">Andrius Andriukaitis</div>
<div class="t" style="left:619.00px;top:427px;font-size:6.7px;color:#4a4a4a;transform:scaleX(0.8800);">SUT-AB</div>
<div class="t" style="left:683.50px;top:427px;font-size:6.7px;color:#4a4a4a;transform:scaleX(0.9600);"></div>
<div class="t" style="left:813.60px;top:427px;font-size:6.7px;color:#4a4a4a;transform:scaleX(0.9600);">Kasmetinės atostogos</div>
<div class="r" style="left:146.20px;top:454.80px;width:858.80px;height:0.80px;background:#f2f2f2"></div>
<div class="r" style="left:153.10px;top:444.05px;width:7.50px;height:7.30px;background:#fff;border:0.7px solid #ebebeb;border-radius:1.5px;box-sizing:border-box"></div>
<div class="t" style="left:180.00px;top:444px;font-size:6.7px;color:#4a4a4a;transform:scaleX(0.8800);">T-A</div>
<div class="t" style="left:246.90px;top:444px;font-size:6.7px;color:#1f8a5c;transform:scaleX(0.9834);">00041</div>
<div class="r" style="left:247.00px;top:450.30px;width:18.20px;height:0.60px;background:#2a9468"></div>
<div class="t" style="left:292.00px;top:444px;font-size:6.7px;color:#4a4a4a;transform:scaleX(1.0725);">2025-07-02</div>
<div class="r" style="left:347.60px;top:440.50px;width:52.70px;height:13.00px;background:#c9f0d0;border-radius:2.5px"></div>
<div class="t" style="left:354.20px;top:444px;font-size:6.7px;color:#23835a;transform:scaleX(0.9600);">Registruotas</div>
<div class="t" style="left:414.70px;top:444px;font-size:6.7px;color:#4a4a4a;transform:scaleX(0.9600);">Tabelio įvykis</div>
<div class="t" style="left:534.00px;top:444px;font-size:6.7px;color:#4a4a4a;transform:scaleX(0.9600);">Andrius Andriukaitis</div>
<div class="t" style="left:619.00px;top:444px;font-size:6.7px;color:#4a4a4a;transform:scaleX(0.8800);">SUT-AB</div>
<div class="t" style="left:683.50px;top:444px;font-size:6.7px;color:#4a4a4a;transform:scaleX(0.9600);">Prašau atlyginimą išmokėti kartu su darb</div>
<div class="t" style="left:813.60px;top:444px;font-size:6.7px;color:#4a4a4a;transform:scaleX(0.9600);">Kasmetinės atostogos</div>
<div class="r" style="left:146.20px;top:472.15px;width:858.80px;height:0.80px;background:#f2f2f2"></div>
<div class="r" style="left:153.10px;top:461.40px;width:7.50px;height:7.30px;background:#fff;border:0.7px solid #ebebeb;border-radius:1.5px;box-sizing:border-box"></div>
<div class="t" style="left:180.00px;top:461px;font-size:6.7px;color:#4a4a4a;transform:scaleX(0.8800);">T-A</div>
<div class="t" style="left:246.90px;top:461px;font-size:6.7px;color:#1f8a5c;transform:scaleX(0.9834);">00040</div>
<div class="r" style="left:247.00px;top:467.30px;width:18.20px;height:0.60px;background:#2a9468"></div>
<div class="t" style="left:292.00px;top:461px;font-size:6.7px;color:#4a4a4a;transform:scaleX(1.0725);">2025-07-01</div>
<div class="r" style="left:347.60px;top:457.85px;width:52.70px;height:13.00px;background:#c9f0d0;border-radius:2.5px"></div>
<div class="t" style="left:354.20px;top:461px;font-size:6.7px;color:#23835a;transform:scaleX(0.9600);">Registruotas</div>
<div class="t" style="left:414.70px;top:461px;font-size:6.7px;color:#4a4a4a;transform:scaleX(0.9600);">Tabelio įvykis</div>
<div class="t" style="left:534.00px;top:461px;font-size:6.7px;color:#4a4a4a;transform:scaleX(0.9600);">Andrius Andriukaitis</div>
<div class="t" style="left:619.00px;top:461px;font-size:6.7px;color:#4a4a4a;transform:scaleX(0.8800);">SUT-AB</div>
<div class="t" style="left:683.50px;top:461px;font-size:6.7px;color:#4a4a4a;transform:scaleX(0.9600);"></div>
<div class="t" style="left:813.60px;top:461px;font-size:6.7px;color:#4a4a4a;transform:scaleX(0.9600);">Kasmetinės atostogos</div>
</div>
<div class="r" style="left:1005.00px;top:108.60px;width:6.80px;height:349.20px;background:#fbfbfb"></div>
<svg class="r" style="left:1005.5px;top:110.4px" width="6" height="4" viewBox="0 0 6 4" fill="#858585"><path d="M0.5 3.5L3 0.6L5.5 3.5z"/></svg>
<svg class="r" style="left:1005.5px;top:452.2px" width="6" height="4" viewBox="0 0 6 4" fill="#858585"><path d="M0.5 0.6L3 3.5L5.5 0.6z"/></svg>
<div class="r" style="left:1006.10px;top:117.00px;width:4.40px;height:221.00px;background:#8c8c8c;border-radius:2.2px"></div>
<div class="t" style="left:153.30px;top:464px;font-size:6.7px;color:#6f747c;transform:scaleX(0.9651);">Rodoma</div>
<div class="r" style="left:180.60px;top:460.90px;width:20.60px;height:12.10px;background:#efeff0;border-radius:2px"></div>
<div class="t" style="left:183.10px;top:464px;font-size:6.7px;font-weight:bold;color:#222;transform:scaleX(0.9118);">1 - 30</div>
<div class="t" style="left:204.10px;top:464px;font-size:6.7px;color:#6f747c;transform:scaleX(0.9498);">iš 39 eilučių</div>
<svg class="r" style="left:906px;top:465px" width="4" height="5" viewBox="0 0 4 5" fill="none" stroke="#c6c6c6" stroke-width="0.8"><path d="M3 0.6L1 2.5L3 4.4"/></svg>
<div class="t" style="left:911.10px;top:465px;font-size:5.6px;font-weight:bold;color:#c9c9c9;transform:scaleX(0.9012);">ANKSTESNIS</div>
<div class="r" style="left:948.60px;top:460.30px;width:12.60px;height:13.10px;background:#fff;border:0.8px solid #e2e2e2;border-radius:2px;box-sizing:border-box"></div>
<div class="t" style="left:953.90px;top:465px;font-size:5.8px;color:#222;">1</div>
<div class="t" style="left:964.20px;top:465px;font-size:5.8px;color:#555;transform:scaleX(1.0507);">iš</div>
<div class="t" style="left:971.70px;top:464px;font-size:6px;font-weight:bold;color:#222;">2</div>
<div class="t" style="left:978.30px;top:465px;font-size:5.6px;font-weight:bold;color:#222;transform:scaleX(0.8733);">KITAS</div>
<svg class="r" style="left:995px;top:465px" width="4" height="5" viewBox="0 0 4 5" fill="none" stroke="#1e8a5c" stroke-width="0.9"><path d="M1 0.6L3 2.5L1 4.4"/></svg>
<div class="r" style="left:0.00px;top:1.50px;width:1024.00px;height:475.50px;background:rgba(0,0,0,0.29)"></div>
<div class="r" style="left:0.00px;top:0.00px;width:1024.00px;height:1.50px;background:#ffffff"></div>
<div class="r" style="left:0.00px;top:2.40px;width:1024.00px;height:0.90px;background:rgba(0,0,0,0.035)"></div>
<div class="r" style="left:252.20px;top:73.10px;width:23.40px;height:18.10px;border:2.2px solid #e8141c;border-radius:3.5px;box-sizing:border-box"></div>
<div class="r" style="left:262.00px;top:90.00px;width:158.90px;height:29.20px;background:#ffffff;border-radius:1px;box-shadow:0 1px 2px rgba(0,0,0,0.12)"></div>
<div class="t" style="left:268.50px;top:97px;font-size:4.5px;font-weight:bold;color:#5d6b88;transform:scaleX(0.9993);letter-spacing:0.36px">AUTOMATIZACIJOS</div>
<svg class="r" style="left:269px;top:106.8px" width="7" height="7" viewBox="0 0 7 7" fill="none" stroke="#333" stroke-width="0.85" stroke-linejoin="round"><path d="M1.2 0.8L5.8 3.5L1.2 6.2z"/></svg>
<div class="t" style="left:279.00px;top:107px;font-size:7.1px;color:#2b2b2b;transform:scaleX(0.9107);">SODROS nedarbingumų importas XML formatu</div>
<div class="r" style="left:401.00px;top:179.60px;width:222.50px;height:145.30px;background:#ffffff;border-radius:3.5px;box-shadow:0 1px 2.5px rgba(0,0,0,0.22)"></div>
<div class="t" style="left:408.50px;top:188px;font-size:7.7px;font-weight:bold;color:#1f1f1f;transform:scaleX(0.9651);">Įveskite parametrus</div>
<svg class="r" style="left:608.6px;top:189.2px" width="5" height="5" viewBox="0 0 5 5" fill="none" stroke="#333" stroke-width="0.8"><path d="M0.6 0.6L4.4 4.4M4.4 0.6L0.6 4.4"/></svg>
<div class="r" style="left:411.20px;top:204.30px;width:202.50px;height:22.20px;background:#fff;border:0.7px solid #eeeeee;border-radius:3px;box-sizing:border-box"></div>
<div class="r" style="left:414.10px;top:206.70px;width:17.80px;height:17.70px;background:#efefef;border-radius:2.5px"></div>
<svg class="r" style="left:419.5px;top:212px" width="7" height="7" viewBox="0 0 7 7" ><rect x="0.6" y="0.8" width="5.8" height="5.6" rx="0.5" fill="none" stroke="#222" stroke-width="0.85"/><rect x="0.6" y="0.8" width="5.8" height="1.6" fill="#222"/></svg>
<div class="t" style="left:436.20px;top:209px;font-size:4.7px;color:#7a7a7a;transform:scaleX(0.9644);">date</div>
<div class="t" style="left:447.20px;top:209px;font-size:4.7px;color:#e53950;">*</div>
<div class="t" style="left:436.20px;top:216px;font-size:6.86px;color:#222;transform:scaleX(0.8663);">2026-01-15</div>
<div class="r" style="left:410.70px;top:232.00px;width:203.00px;height:22.60px;background:#fff;border:0.7px solid #eeeeee;border-radius:3px;box-sizing:border-box"></div>
<div class="t" style="left:420.00px;top:237px;font-size:4.9px;color:#7a7a7a;transform:scaleX(0.9385);">Personalo dokumentų šablonas</div>
<div class="t" style="left:486.30px;top:236px;font-size:4.9px;color:#e53950;">*</div>
<div class="t" style="left:421.10px;top:244px;font-size:6.86px;color:#222;transform:scaleX(0.9277);">T-NEDARB - Liga ir nedarbingumas</div>
<svg class="r" style="left:591px;top:240.5px" width="5" height="5" viewBox="0 0 5 5" fill="none" stroke="#b6c3cc" stroke-width="0.8"><path d="M0.7 0.7L4.3 4.3M4.3 0.7L0.7 4.3"/></svg>
<svg class="r" style="left:601.3px;top:241px" width="5" height="4" viewBox="0 0 5 4" fill="none" stroke="#222" stroke-width="0.9"><path d="M0.8 1.1L2.5 2.9L4.2 1.1"/></svg>
<div class="r" style="left:411.20px;top:259.40px;width:202.20px;height:22.30px;background:#fff;border-radius:3px"></div>
<svg class="r" style="left:411.2px;top:259.4px" width="202.2" height="22.3" viewBox="0 0 202.2 22.3"><rect x="0.45" y="0.45" width="201.3" height="21.4" rx="2.5" fill="none" stroke="#c2c2c2" stroke-width="0.9" stroke-dasharray="1.9 1.5"/></svg>
<svg class="r" style="left:421.5px;top:266.4px" width="7" height="8" viewBox="0 0 7 8" fill="none" stroke="#333" stroke-width="0.8"><path d="M4.2 0.6H1.2v6.8h2.2M4.2 0.6L6.2 2.6V3.6M4.2 0.6v2h2"/><path d="M4.4 5.2l1.6 1.6M6 5.2L4.4 6.8" /></svg>
<div class="t" style="left:433.70px;top:267px;font-size:7.0px;color:#333;transform:scaleX(0.8515);">Report15 (1).xml</div>
<svg class="r" style="left:601.6px;top:267.2px" width="7" height="7" viewBox="0 0 7 7" fill="none" stroke="#333" stroke-width="0.8"><circle cx="3.5" cy="3.5" r="2.8"/><path d="M2.4 2.4l2.2 2.2M4.6 2.4L2.4 4.6"/></svg>
<div class="t" style="left:547.20px;top:306px;font-size:6.45px;color:#222;transform:scaleX(0.9954);">Atšaukti</div>
<div class="r" style="left:581.00px;top:300.70px;width:35.30px;height:17.30px;background:#12b46e;border-radius:2.5px"></div>
<div class="t" style="left:588.00px;top:306px;font-size:6.45px;font-weight:bold;color:#ffffff;transform:scaleX(0.9395);">Vykdyti</div>
</body></html>
